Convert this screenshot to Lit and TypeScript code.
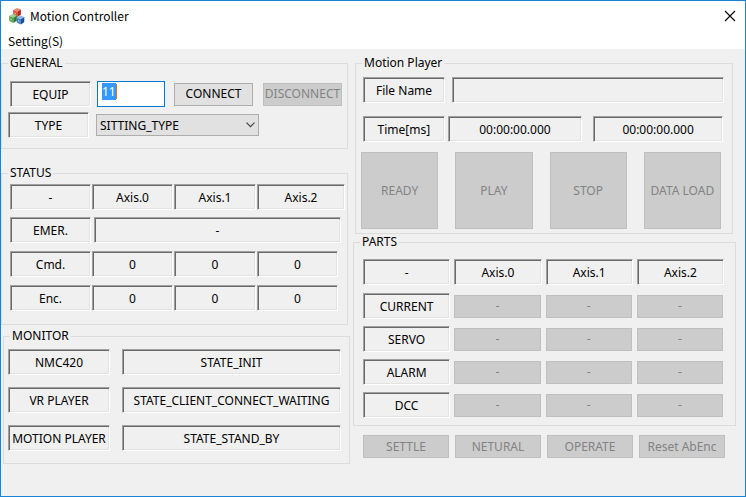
import { LitElement, html, css, svg } from "lit";
import { customElement, query, state } from "lit/decorators.js";

const AXES = ["Axis.0", "Axis.1", "Axis.2"];
const PLAYER_ACTIONS = ["READY", "PLAY", "STOP", "DATA LOAD"];
const PART_ROWS = ["CURRENT", "SERVO", "ALARM", "DCC"];
const SERVO_ACTIONS = ["SETTLE", "NETURAL", "OPERATE", "Reset AbEnc"];
const MONITORS = [
  { name: "NMC420", state: "STATE_INIT" },
  { name: "VR PLAYER", state: "STATE_CLIENT_CONNECT_WAITING" },
  { name: "MOTION PLAYER", state: "STATE_STAND_BY" },
];

const cube = (x: number, y: number, top: string, left: string, right: string) => svg`
  <g transform="translate(${x} ${y})">
    <path d="M0 2 L4 0 L8 1.6 L4.4 3.8 Z" fill=${top}></path>
    <path d="M0 2 L4.4 3.8 L4.4 9 L0.4 7 Z" fill=${left}></path>
    <path d="M4.4 3.8 L8 1.6 L7.8 6.8 L4.4 9 Z" fill=${right}></path>
    <path d="M1.5 4.4 L2.9 5 L2.9 6.6 L1.6 6 Z" fill="#fff" opacity="0.55"></path>
  </g>`;

@customElement("app-root")
export class AppRoot extends LitElement {
  @state() private equip = "11";
  @query(".equip-input") private equipInput!: HTMLInputElement;

  static styles = css`
    :host {
      display: flex;
      flex-direction: column;
      box-sizing: border-box;
      min-height: 100vh;
      border: 1px solid #1883d7;
      background: #f0f0f0;
      color: #000;
      font: 12px/14px "Noto Sans", sans-serif;
    }
    * {
      box-sizing: border-box;
    }
    button,
    input,
    select {
      font: inherit;
      color: inherit;
      margin: 0;
      border-radius: 0;
    }
    .titlebar,
    .menubar {
      display: flex;
      align-items: center;
      background: #fff;
      font-family: "Noto Sans CJK KR", sans-serif;
    }
    .titlebar {
      height: 30px;
      padding: 0 9px 0 7px;
    }
    .title {
      flex: 1;
      margin: 0 0 0 5px;
      font-size: 12px;
      font-weight: 400;
    }
    .close {
      display: flex;
      padding: 0;
      border: 0;
      background: none;
    }
    .menubar {
      height: 18px;
      padding: 2px 7px 0;
    }
    .menu-item {
      padding: 0;
      border: 0;
      background: none;
    }
    .content {
      display: grid;
      grid-template-columns: 349fr 383fr;
      gap: 3px;
      padding: 6px 9px 0 0;
    }
    .column {
      display: flex;
      flex-direction: column;
      min-width: 0;
    }
    fieldset {
      --inset: 0px;
      min-width: 0;
      margin: 0;
      border: 1px solid #dcdcdc;
    }
    legend {
      height: 16px;
      margin-left: calc(6px - var(--inset));
      padding: 0 2px;
      line-height: 16px;
    }
    .general {
      margin-right: 2px;
      padding: 10px 5px 10px 0;
    }
    .status {
      --inset: 8px;
      margin: 16px 2px 0 0;
      padding: 3px 2px 13px var(--inset);
    }
    .monitor {
      --inset: 4px;
      margin: 3px 0 0 2px;
      padding: 5px 8px 12px var(--inset);
    }
    .player {
      --inset: 5px;
      margin: 0 3px 0 2px;
      padding: 6px 8px 4px var(--inset);
    }
    .parts {
      --inset: 9px;
      padding: 9px 11px 7px var(--inset);
    }
    .equip-row {
      display: grid;
      grid-template-columns: 87fr 77fr 89fr 79fr;
      align-items: center;
      padding-left: 8px;
    }
    .equip-row .sunken {
      margin-right: 6px;
    }
    .field {
      display: flex;
      align-items: center;
    }
    .type-row {
      display: grid;
      grid-template-columns: 88fr 246fr;
      align-items: center;
      margin-top: 5px;
      padding-left: 6px;
    }
    .type-row .sunken {
      margin-right: 7px;
    }
    .sunken {
      display: flex;
      align-items: center;
      justify-content: center;
      min-width: 0;
      height: 26px;
      padding: 2px 0 0;
      border: 1px solid;
      border-color: #a0a0a0 #fff #fff #a0a0a0;
      box-shadow: inset 1px 1px #696969, inset -1px -1px #e3e3e3;
      font-weight: 400;
      white-space: nowrap;
    }
    .equip-input {
      width: auto;
      min-width: 0;
      height: 26px;
      margin-right: 9px;
      padding: 0 4px 6px;
      border: 1px solid #0078d7;
      outline: 0;
      background: linear-gradient(#d9730a, #d9730a) 18px 2px / 1px 15px no-repeat #fff;
    }
    .equip-input::selection {
      background: #3399ff;
      color: #fff;
    }
    .push {
      min-width: 0;
      height: 23px;
      padding: 0;
      border: 1px solid #adadad;
      background: #e1e1e1;
      white-space: nowrap;
    }
    .push:disabled {
      border-color: #bfbfbf;
      background: #ccc;
      color: #838383;
    }
    .connect {
      margin-right: 10px;
    }
    .select-wrap {
      display: grid;
      margin-right: 83px;
    }
    .select-wrap > * {
      grid-area: 1 / 1;
    }
    .type-select {
      appearance: none;
      width: 100%;
      height: 22px;
      padding: 1px 20px 0 3px;
      border: 1px solid #adadad;
      background: #e1e1e1;
    }
    .chevron {
      align-self: center;
      justify-self: end;
      margin-right: 4px;
      pointer-events: none;
    }
    table,
    thead,
    tbody {
      display: flex;
      flex-direction: column;
      gap: 7px;
    }
    .status tbody,
    .parts table {
      gap: 8px;
    }
    tr {
      display: grid;
      align-items: center;
    }
    .status tr {
      gap: 1px;
    }
    .axis-head {
      grid-template-columns: 81fr 81fr 82fr 88fr;
    }
    .axis-row {
      grid-template-columns: 81fr 81fr 82fr 81fr;
      padding-right: 7px;
    }
    .emer-row {
      grid-template-columns: 83fr 247fr;
      padding-right: 4px;
    }
    .emer-row th {
      margin-right: 2px;
    }
    .monitor-list {
      display: flex;
      flex-direction: column;
      gap: 12px;
      margin: 0;
    }
    .monitor-row {
      display: grid;
      grid-template-columns: 102fr 219fr;
      gap: 12px;
    }
    .monitor-row dd {
      margin: 0;
    }
    .player-form {
      display: flex;
      flex-direction: column;
      gap: 13px;
      padding-left: 2px;
    }
    .caption {
      flex: 81 1 0;
    }
    .file-value {
      flex: 273 1 0;
      margin-left: 7px;
    }
    .time-value {
      flex: 135 1 0;
      margin-left: 3px;
    }
    .time-value + .time-value {
      flex-grow: 130;
      margin: 0 1px 0 11px;
    }
    .transport {
      display: grid;
      grid-template-columns: repeat(4, 1fr);
      gap: 17px;
      margin-top: 10px;
      padding-right: 3px;
    }
    .transport .push {
      height: 77px;
    }
    .part-row {
      grid-template-columns: repeat(4, 1fr);
      gap: 4px;
    }
    .part-row td {
      display: grid;
      padding: 0 1px 0 0;
    }
    .actions {
      display: grid;
      grid-template-columns: repeat(4, 1fr);
      gap: 6px;
      margin-top: 9px;
      padding: 0 11px 0 10px;
    }
  `;

  protected firstUpdated() {
    this.equipInput.focus();
    this.equipInput.select();
  }

  private appIcon() {
    return html`<svg width="17" height="17" viewBox="0 0 17 17" aria-hidden="true">
      ${cube(5, 0, "#e88a72", "#d9503a", "#b02a1c")}
      ${cube(1, 6, "#9fce86", "#57a548", "#2f7a34")}
      ${cube(8.4, 7.4, "#8fb8e6", "#3f7fca", "#1f4f9a")}
    </svg>`;
  }

  private general() {
    return html`<fieldset class="general">
      <legend>GENERAL</legend>
      <div class="equip-row">
        <label class="sunken" for="equip">EQUIP</label>
        <input id="equip" class="equip-input" type="text" size="1" .value=${this.equip}
          @input=${(e: Event) => (this.equip = (e.target as HTMLInputElement).value)} />
        <button class="push connect" type="button">CONNECT</button>
        <button class="push" type="button" disabled>DISCONNECT</button>
      </div>
      <div class="type-row">
        <label class="sunken" for="type">TYPE</label>
        <div class="select-wrap">
          <select id="type" class="type-select"><option>SITTING_TYPE</option></select>
          <svg class="chevron" width="9" height="6" viewBox="0 0 9 6" aria-hidden="true">
            <path d="M0.5 0.7 L4.5 4.7 L8.5 0.7" fill="none" stroke="#444" stroke-width="1.2"></path>
          </svg>
        </div>
      </div>
    </fieldset>`;
  }

  private status() {
    return html`<fieldset class="status">
      <legend>STATUS</legend>
      <table>
        <thead>
          <tr class="axis-head">
            <th class="sunken">-</th>
            ${AXES.map((a) => html`<th class="sunken">${a}</th>`)}
          </tr>
        </thead>
        <tbody>
          <tr class="emer-row"><th class="sunken">EMER.</th><td class="sunken">-</td></tr>
          ${["Cmd.", "Enc."].map((name) => html`<tr class="axis-row">
            <th class="sunken">${name}</th>
            ${AXES.map(() => html`<td class="sunken">0</td>`)}
          </tr>`)}
        </tbody>
      </table>
    </fieldset>`;
  }

  private monitor() {
    return html`<fieldset class="monitor">
      <legend>MONITOR</legend>
      <dl class="monitor-list">
        ${MONITORS.map((m) => html`<div class="monitor-row">
          <dt class="sunken">${m.name}</dt><dd class="sunken">${m.state}</dd>
        </div>`)}
      </dl>
    </fieldset>`;
  }

  private player() {
    return html`<fieldset class="player">
      <legend>Motion Player</legend>
      <div class="player-form">
        <div class="field">
          <span class="sunken caption">File Name</span>
          <output class="sunken file-value" aria-label="File Name"></output>
        </div>
        <div class="field">
          <span class="sunken caption">Time[ms]</span>
          <output class="sunken time-value">00:00:00.000</output>
          <output class="sunken time-value">00:00:00.000</output>
        </div>
      </div>
      <div class="transport">
        ${PLAYER_ACTIONS.map((a) => html`<button class="push" type="button" disabled>${a}</button>`)}
      </div>
    </fieldset>`;
  }

  private parts() {
    return html`<fieldset class="parts">
      <legend>PARTS</legend>
      <table>
        <thead>
          <tr class="part-row">
            <th class="sunken">-</th>
            ${AXES.map((a) => html`<th class="sunken">${a}</th>`)}
          </tr>
        </thead>
        <tbody>
          ${PART_ROWS.map((name) => html`<tr class="part-row">
            <th class="sunken">${name}</th>
            ${AXES.map((a) => html`<td>
              <button class="push" type="button" disabled aria-label="${name} ${a}">-</button>
            </td>`)}
          </tr>`)}
        </tbody>
      </table>
    </fieldset>`;
  }

  render() {
    return html`
      <header class="titlebar">
        ${this.appIcon()}
        <h1 class="title">Motion Controller</h1>
        <button class="close" type="button" aria-label="Close">
          <svg width="12" height="12" viewBox="0 0 12 12" aria-hidden="true">
            <path d="M1 1 L11 11 M11 1 L1 11" stroke="#000" stroke-width="1.1"></path>
          </svg>
        </button>
      </header>
      <nav class="menubar"><button class="menu-item" type="button">Setting(S)</button></nav>
      <main class="content">
        <div class="column">${this.general()}${this.status()}${this.monitor()}</div>
        <div class="column">
          ${this.player()}${this.parts()}
          <div class="actions">
            ${SERVO_ACTIONS.map((a) => html`<button class="push" type="button" disabled>${a}</button>`)}
          </div>
        </div>
      </main>
    `;
  }
}
